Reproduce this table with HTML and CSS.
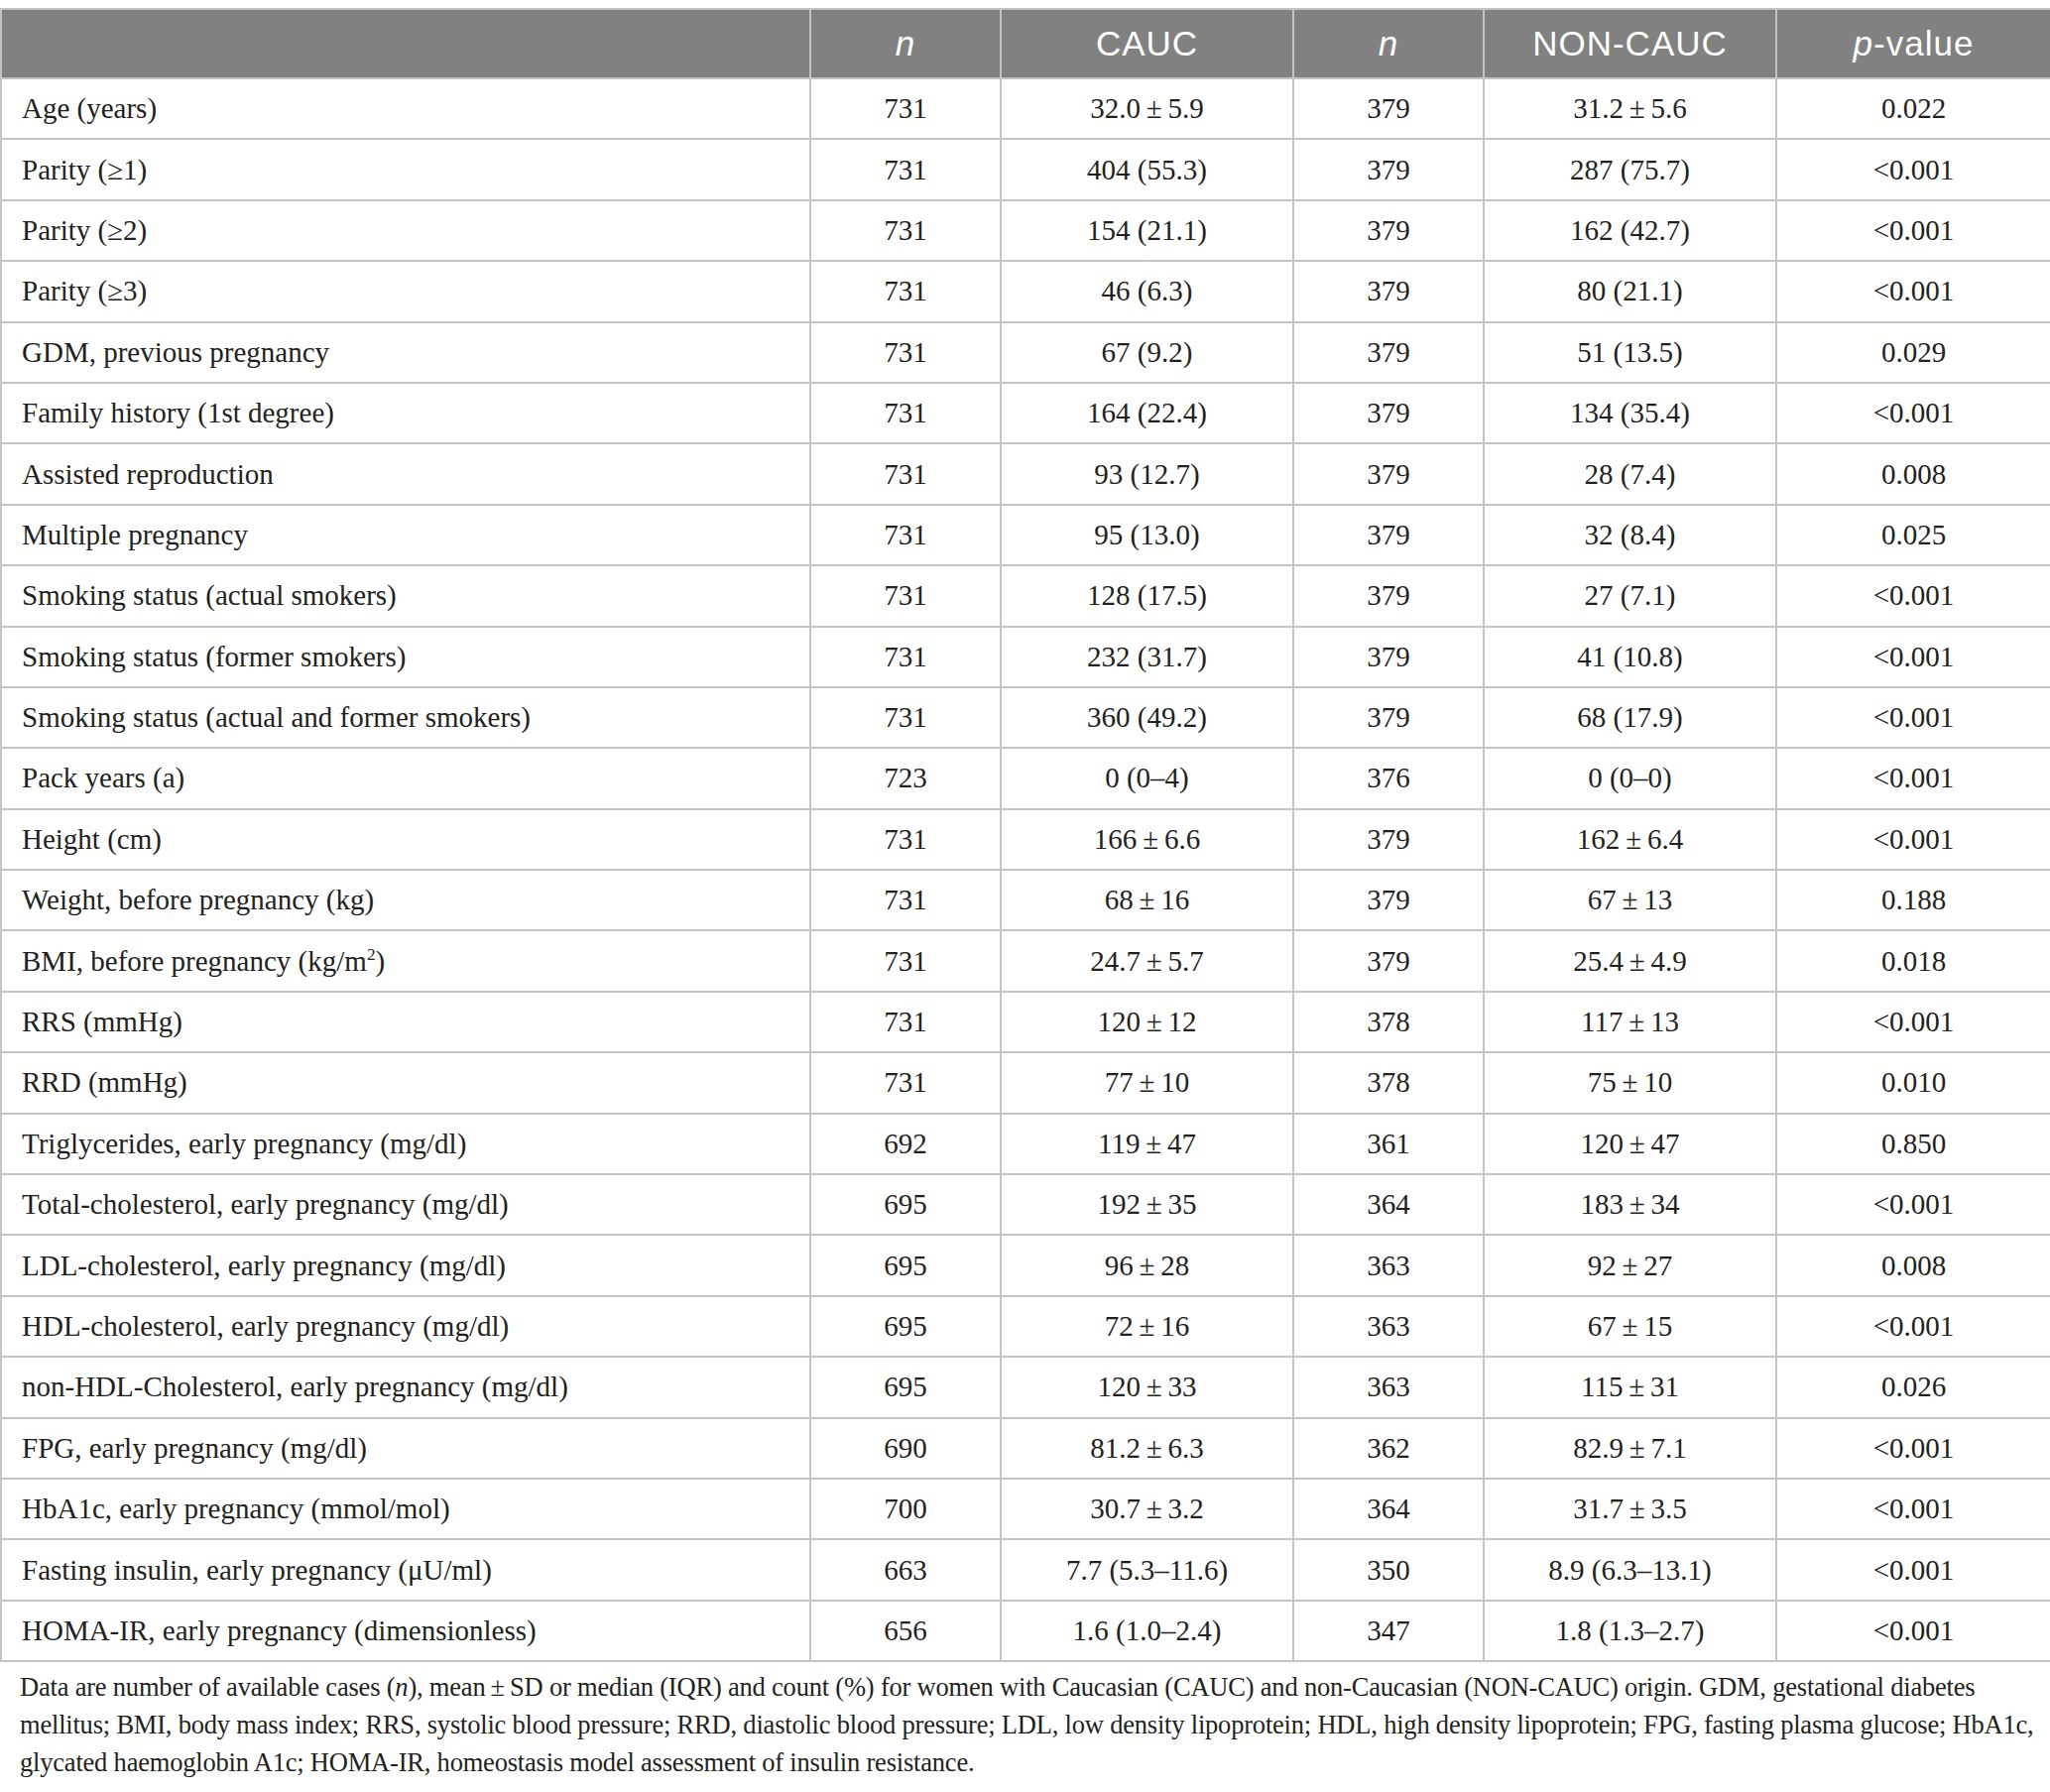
FILE: index.html
```html
<!DOCTYPE html>
<html lang="en">

<head>
    <meta charset="UTF-8">
    <title>Characteristics of women by origin</title>
    <link rel="stylesheet" href="styles.css">
</head>

<body>
    <table class="data-table">
        <colgroup>
            <col class="col-label">
            <col class="col-n">
            <col class="col-value">
            <col class="col-n">
            <col class="col-value">
            <col class="col-p">
        </colgroup>
        <thead>
            <tr>
                <th></th>
                <th><i>n</i></th>
                <th>CAUC</th>
                <th><i>n</i></th>
                <th>NON-CAUC</th>
                <th><i>p</i>-value</th>
            </tr>
        </thead>
        <tbody>
            <tr><td>Age (years)</td><td>731</td><td>32.0&#8201;±&#8201;5.9</td><td>379</td><td>31.2&#8201;±&#8201;5.6</td><td>0.022</td></tr>
            <tr><td>Parity (≥1)</td><td>731</td><td>404 (55.3)</td><td>379</td><td>287 (75.7)</td><td>&lt;0.001</td></tr>
            <tr><td>Parity (≥2)</td><td>731</td><td>154 (21.1)</td><td>379</td><td>162 (42.7)</td><td>&lt;0.001</td></tr>
            <tr><td>Parity (≥3)</td><td>731</td><td>46 (6.3)</td><td>379</td><td>80 (21.1)</td><td>&lt;0.001</td></tr>
            <tr><td>GDM, previous pregnancy</td><td>731</td><td>67 (9.2)</td><td>379</td><td>51 (13.5)</td><td>0.029</td></tr>
            <tr><td>Family history (1st degree)</td><td>731</td><td>164 (22.4)</td><td>379</td><td>134 (35.4)</td><td>&lt;0.001</td></tr>
            <tr><td>Assisted reproduction</td><td>731</td><td>93 (12.7)</td><td>379</td><td>28 (7.4)</td><td>0.008</td></tr>
            <tr><td>Multiple pregnancy</td><td>731</td><td>95 (13.0)</td><td>379</td><td>32 (8.4)</td><td>0.025</td></tr>
            <tr><td>Smoking status (actual smokers)</td><td>731</td><td>128 (17.5)</td><td>379</td><td>27 (7.1)</td><td>&lt;0.001</td></tr>
            <tr><td>Smoking status (former smokers)</td><td>731</td><td>232 (31.7)</td><td>379</td><td>41 (10.8)</td><td>&lt;0.001</td></tr>
            <tr><td>Smoking status (actual and former smokers)</td><td>731</td><td>360 (49.2)</td><td>379</td><td>68 (17.9)</td><td>&lt;0.001</td></tr>
            <tr><td>Pack years (a)</td><td>723</td><td>0 (0–4)</td><td>376</td><td>0 (0–0)</td><td>&lt;0.001</td></tr>
            <tr><td>Height (cm)</td><td>731</td><td>166&#8201;±&#8201;6.6</td><td>379</td><td>162&#8201;±&#8201;6.4</td><td>&lt;0.001</td></tr>
            <tr><td>Weight, before pregnancy (kg)</td><td>731</td><td>68&#8201;±&#8201;16</td><td>379</td><td>67&#8201;±&#8201;13</td><td>0.188</td></tr>
            <tr><td>BMI, before pregnancy (kg/m<sup>2</sup>)</td><td>731</td><td>24.7&#8201;±&#8201;5.7</td><td>379</td><td>25.4&#8201;±&#8201;4.9</td><td>0.018</td></tr>
            <tr><td>RRS (mmHg)</td><td>731</td><td>120&#8201;±&#8201;12</td><td>378</td><td>117&#8201;±&#8201;13</td><td>&lt;0.001</td></tr>
            <tr><td>RRD (mmHg)</td><td>731</td><td>77&#8201;±&#8201;10</td><td>378</td><td>75&#8201;±&#8201;10</td><td>0.010</td></tr>
            <tr><td>Triglycerides, early pregnancy (mg/dl)</td><td>692</td><td>119&#8201;±&#8201;47</td><td>361</td><td>120&#8201;±&#8201;47</td><td>0.850</td></tr>
            <tr><td>Total-cholesterol, early pregnancy (mg/dl)</td><td>695</td><td>192&#8201;±&#8201;35</td><td>364</td><td>183&#8201;±&#8201;34</td><td>&lt;0.001</td></tr>
            <tr><td>LDL-cholesterol, early pregnancy (mg/dl)</td><td>695</td><td>96&#8201;±&#8201;28</td><td>363</td><td>92&#8201;±&#8201;27</td><td>0.008</td></tr>
            <tr><td>HDL-cholesterol, early pregnancy (mg/dl)</td><td>695</td><td>72&#8201;±&#8201;16</td><td>363</td><td>67&#8201;±&#8201;15</td><td>&lt;0.001</td></tr>
            <tr><td>non-HDL-Cholesterol, early pregnancy (mg/dl)</td><td>695</td><td>120&#8201;±&#8201;33</td><td>363</td><td>115&#8201;±&#8201;31</td><td>0.026</td></tr>
            <tr><td>FPG, early pregnancy (mg/dl)</td><td>690</td><td>81.2&#8201;±&#8201;6.3</td><td>362</td><td>82.9&#8201;±&#8201;7.1</td><td>&lt;0.001</td></tr>
            <tr><td>HbA1c, early pregnancy (mmol/mol)</td><td>700</td><td>30.7&#8201;±&#8201;3.2</td><td>364</td><td>31.7&#8201;±&#8201;3.5</td><td>&lt;0.001</td></tr>
            <tr><td>Fasting insulin, early pregnancy (μU/ml)</td><td>663</td><td>7.7 (5.3–11.6)</td><td>350</td><td>8.9 (6.3–13.1)</td><td>&lt;0.001</td></tr>
            <tr><td>HOMA-IR, early pregnancy (dimensionless)</td><td>656</td><td>1.6 (1.0–2.4)</td><td>347</td><td>1.8 (1.3–2.7)</td><td>&lt;0.001</td></tr>
        </tbody>
    </table>

    <!-- Table footnote -->
    <p class="footnote">Data are number of available cases (<i>n</i>), mean&#8201;±&#8201;SD or median (IQR) and count (%) for women with Caucasian (CAUC) and non-Caucasian (NON-CAUC) origin. GDM, gestational diabetes<br>mellitus; BMI, body mass index; RRS, systolic blood pressure; RRD, diastolic blood pressure; LDL, low density lipoprotein; HDL, high density lipoprotein; FPG, fasting plasma glucose; HbA1c,<br>glycated haemoglobin A1c; HOMA-IR, homeostasis model assessment of insulin resistance.</p>
</body>

</html>
```

FILE: styles.css
```css
body {
    margin: 0;
    padding-top: 8px;
    background-color: #fff;
    color: #231f20;
    font-family: "Liberation Serif", "Times New Roman", serif;
}

.data-table {
    width: 2067px;
    border-collapse: collapse;
    table-layout: fixed;
    font-size: 29px;
}

.col-label {
    width: 816px;
}

.col-n {
    width: 192px;
}

.col-value {
    width: 295px;
}

.col-p {
    width: 277px;
}

.data-table th,
.data-table td {
    border: 2px solid #c4c4c4;
    text-align: center;
    padding: 0;
}

.data-table th {
    height: 68px;
    background-color: #808180;
    color: #fff;
    font-family: "Liberation Sans", Arial, sans-serif;
    font-weight: normal;
    font-size: 35px;
    letter-spacing: 1px;
}

.data-table td {
    height: 59.4px;
}

.data-table td:first-child {
    text-align: left;
    padding-left: 20px;
}

.data-table sup {
    font-size: 60%;
    line-height: 0;
}

.footnote {
    margin: 6px 0 0;
    padding: 0 0 0 20px;
    font-size: 26.5px;
    letter-spacing: -0.2px;
    line-height: 38px;
}
```
